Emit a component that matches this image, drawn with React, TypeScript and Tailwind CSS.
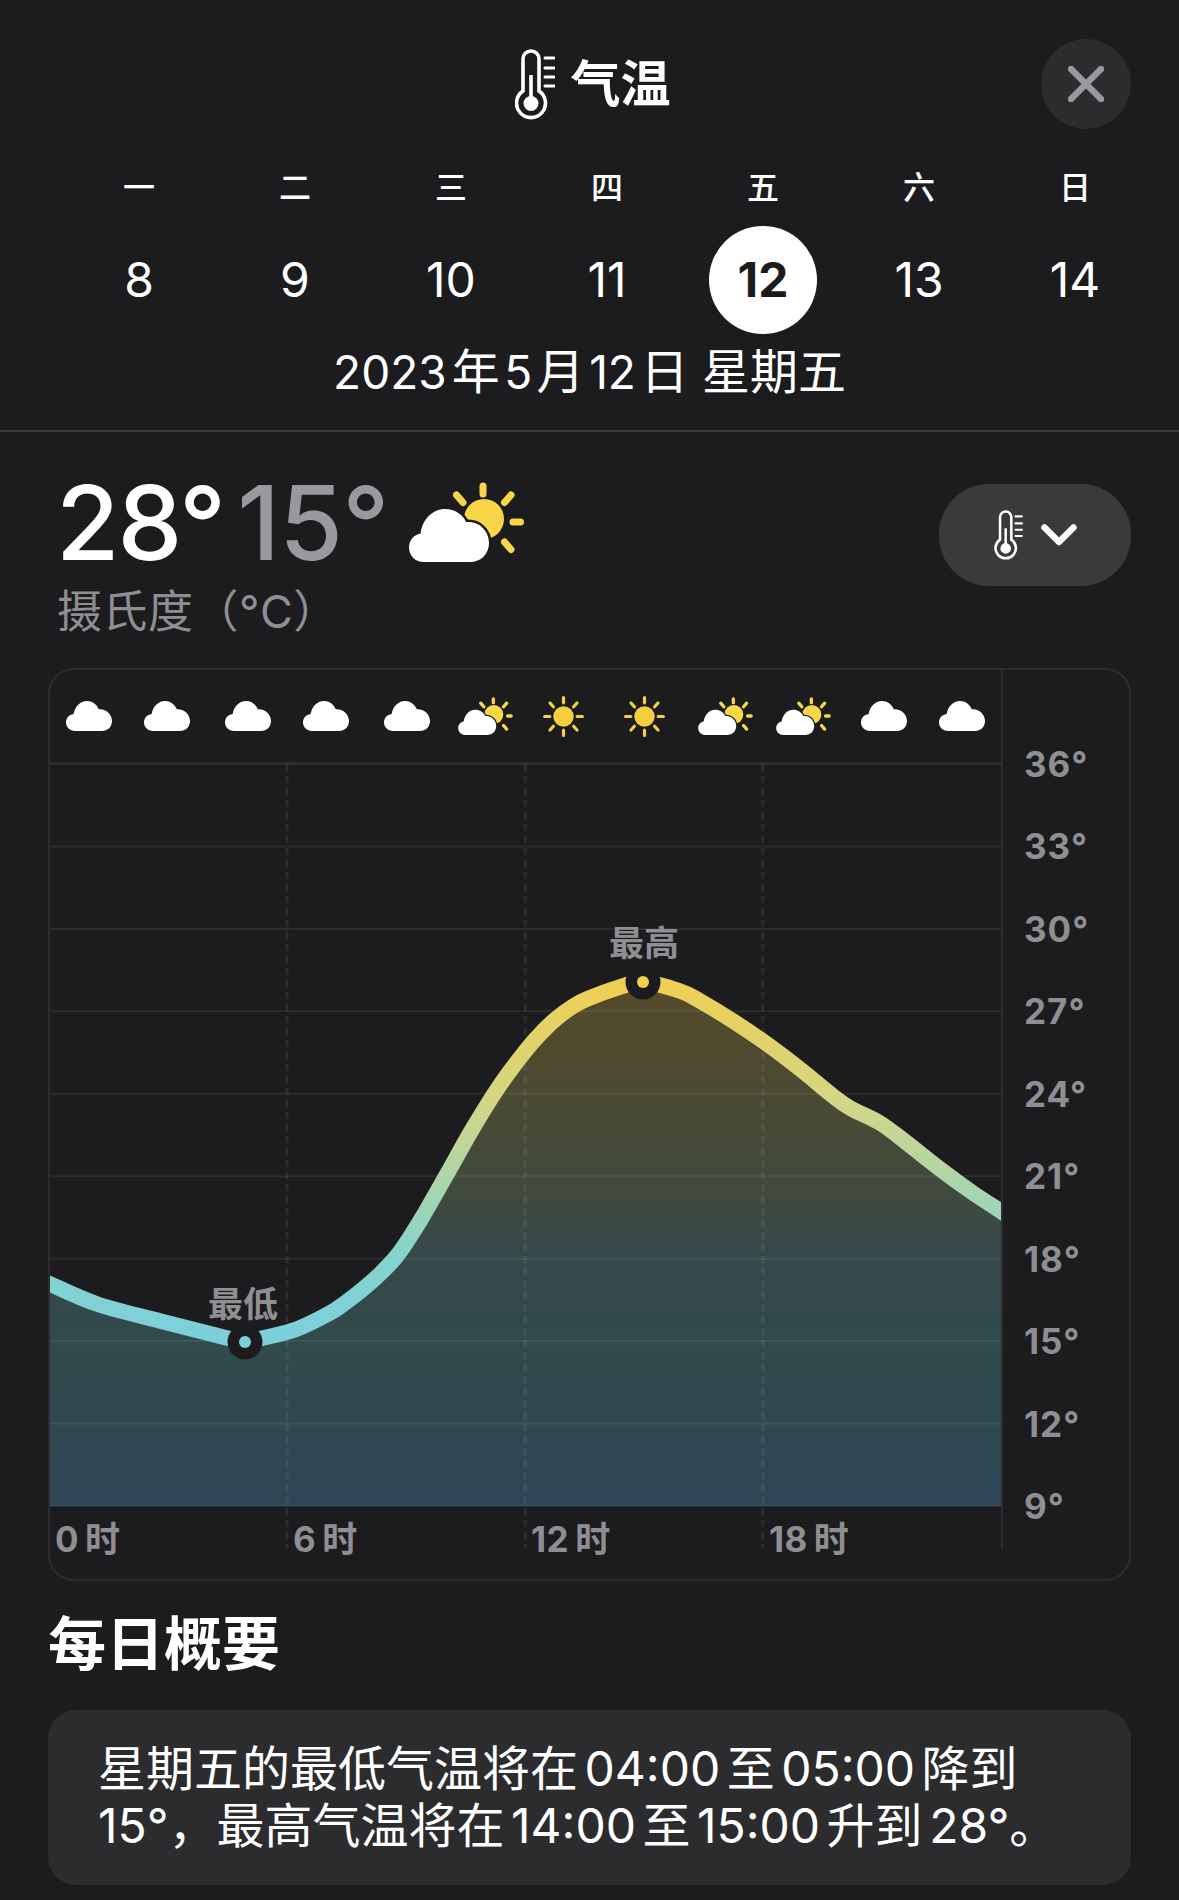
const weekDays = [
  { name: '一', day: '8' },
  { name: '二', day: '9' },
  { name: '三', day: '10' },
  { name: '四', day: '11' },
  { name: '五', day: '12', active: true },
  { name: '六', day: '13' },
  { name: '日', day: '14' },
];

const hourly = [
  { kind: 'c', nudge: '-translate-x-[1px]' },
  { kind: 'c', nudge: '-translate-x-[2px]' },
  { kind: 'c', nudge: '' },
  { kind: 'c', nudge: '-translate-x-[1px]' },
  { kind: 'c', nudge: '' },
  { kind: 'p', nudge: '' },
  { kind: 's', nudge: '-translate-x-[2px]' },
  { kind: 's', nudge: '' },
  { kind: 'p', nudge: 'translate-x-[2px]' },
  { kind: 'p', nudge: 'translate-x-[1px]' },
  { kind: 'c', nudge: 'translate-x-[2px]' },
  { kind: 'c', nudge: 'translate-x-[1px]' },
];
const scale = ['36°', '33°', '30°', '27°', '24°', '21°', '18°', '15°', '12°', '9°'];
const gridLines = [0, 1, 2, 3, 4, 5, 6, 7, 8, 9].map((i) => 763 + i * 82.44);
const hourLines = [287, 525, 763];
const hourLabels = [
  { x: 55, num: '0' },
  { x: 293, num: '6' },
  { x: 531, num: '12' },
  { x: 769, num: '18' },
];

const curve: [number, number][] = [
  [40, 1278], [48, 1282], [97, 1303], [160, 1320], [227, 1337], [245, 1341], [263, 1337], [297, 1328],
  [330, 1312], [345, 1302], [363, 1288], [380, 1273], [396, 1256], [410, 1236], [423, 1215], [447, 1173],
  [473, 1127], [500, 1084], [527, 1048], [543, 1030], [557, 1017], [572, 1006], [587, 998], [620, 986],
  [643, 981], [680, 990], [700, 1000], [733, 1020], [767, 1043], [800, 1068], [833, 1095], [850, 1107],
  [880, 1122], [907, 1142], [940, 1168], [973, 1192], [1002, 1211], [1012, 1218],
];

// catmull-rom through the sampled points
function smooth(pts: [number, number][]) {
  let d = `M${pts[0][0]} ${pts[0][1]}`;
  for (let i = 0; i < pts.length - 1; i++) {
    const p0 = pts[Math.max(i - 1, 0)];
    const p1 = pts[i];
    const p2 = pts[i + 1];
    const p3 = pts[Math.min(i + 2, pts.length - 1)];
    const c1x = p1[0] + (p2[0] - p0[0]) / 6;
    const c1y = p1[1] + (p2[1] - p0[1]) / 6;
    const c2x = p2[0] - (p3[0] - p1[0]) / 6;
    const c2y = p2[1] - (p3[1] - p1[1]) / 6;
    d += ` C${c1x} ${c1y} ${c2x} ${c2y} ${p2[0]} ${p2[1]}`;
  }
  return d;
}

function Thermometer({ className }: { className: string }) {
  return (
    <svg viewBox="0 0 40 71" className={className} fill="none" stroke="#fff">
      <path d="M8 42V10a8 8 0 0 1 16 0V42a14.5 14.5 0 1 1-16 0Z" strokeWidth="3.6" />
      <path d="M16 26V54" strokeWidth="3.6" />
      <circle cx="16" cy="54.5" r="7.5" fill="#fff" stroke="none" />
      <path d="M30 9H39M30 19H39M30 28H39M30 37H39" strokeWidth="3" strokeLinecap="round" />
    </svg>
  );
}

function Cloud({ className }: { className: string }) {
  return (
    <svg viewBox="0 0 46 30" className={className} fill="#fff">
      <path d="M9 30C4 30 0 26.4 0 21.6 0 17 3 13.8 7.6 13 9 5.5 14 0 21 0c5.4 0 9.6 3.2 11.8 8.2C40 7.6 46 13 46 20c0 5.8-4.2 10-10 10Z" />
    </svg>
  );
}

function Sun({ className }: { className: string }) {
  return (
    <svg viewBox="0 0 41 41" className={className} stroke="#f6cf41" strokeWidth="3.2" strokeLinecap="round">
      <circle cx="20.5" cy="20.5" r="10.2" fill="#f6cf41" stroke="none" />
      <path d="M20.5 1.6V6.8M20.5 34.2V39.4M1.6 20.5H6.8M34.2 20.5H39.4M7 7l3.4 3.8M30.6 30.2l3.4 3.8M34 7l-3.4 3.8M10.4 30.2L7 34" />
    </svg>
  );
}

function PartlyCloudy({ className }: { className: string }) {
  return (
    <svg viewBox="0 0 115 80" className={className}>
      <circle cx="75" cy="37" r="20" fill="#f8d648" />
      <path
        d="M74 4V12M47.5 13L54 20.5M102 13L95.5 20.5M95.5 60L102 67.5M104 40H111.5"
        stroke="#f8d648"
        strokeWidth="7"
        strokeLinecap="round"
        fill="none"
      />
      <path
        d="M15 80C6.5 80 0 73.6 0 65.4 0 58 4.8 52.8 11.6 51.4 13.4 37 24 27 36 27c9.6 0 17.6 5.4 21.4 13.2C70 39 80 49 80 61c0 11-8 19-19 19Z"
        fill="#fff"
        stroke="#1c1c1e"
        strokeWidth="5"
        paintOrder="stroke"
      />
    </svg>
  );
}

function TemperatureChart() {
  const line = smooth(curve);
  return (
    <svg viewBox="50 763 951 785" className="block w-[951px] h-[785px] overflow-visible">
      <defs>
        <linearGradient id="stroke" gradientUnits="userSpaceOnUse" x1="0" y1="981" x2="0" y2="1342">
          <stop offset="0" stopColor="#efcf52" />
          <stop offset="0.33" stopColor="#d4d686" />
          <stop offset="0.53" stopColor="#b1d5a6" />
          <stop offset="0.745" stopColor="#87d4cb" />
          <stop offset="1" stopColor="#7bcfdd" />
        </linearGradient>
        <linearGradient id="area" gradientUnits="userSpaceOnUse" x1="0" y1="981" x2="0" y2="1505">
          <stop offset="0" stopColor="#554a29" />
          <stop offset="0.227" stopColor="#4a4a33" />
          <stop offset="0.418" stopColor="#3f4a3e" />
          <stop offset="0.513" stopColor="#36494a" />
          <stop offset="0.69" stopColor="#314a4c" />
          <stop offset="1" stopColor="#2e4656" />
        </linearGradient>
        <clipPath id="plot">
          <rect x="50" y="763" width="951" height="785" />
        </clipPath>
      </defs>
      <g clipPath="url(#plot)">
        <path d={`${line} L1012 1505 L40 1505 Z`} fill="url(#area)" />
        {gridLines.map((y) => (
          <line key={y} x1="50" x2="1001" y1={y} y2={y} stroke="#fff" strokeOpacity="0.07" strokeWidth="2" />
        ))}
        {hourLines.map((x) => (
          <line key={x} x1={x} x2={x} y1="763" y2="1547" stroke="#fff" strokeOpacity="0.07" strokeWidth="3" strokeDasharray="7 5" />
        ))}
        <path d={line} fill="none" stroke="url(#stroke)" strokeWidth="15.5" />
      </g>
      <circle cx="245" cy="1341" r="17.5" fill="#1c1c1e" />
      <circle cx="245" cy="1341" r="6" fill="#7bcfdd" />
      <circle cx="643" cy="981" r="17.5" fill="#1c1c1e" />
      <circle cx="643" cy="981" r="6" fill="#f0cf50" />
      <g fontSize="35" fontWeight="600" fill="#8e8e93">
        <text x="243" y="1316" textAnchor="middle">最低</text>
        <text x="644" y="955" textAnchor="middle">最高</text>
        {hourLabels.map((l) => (
          <text key={l.num} x={l.x} y="1551" fontWeight="700" letterSpacing="0.5">{`${l.num}\u2009时`}</text>
        ))}
      </g>
    </svg>
  );
}

// latin runs inside a chinese line keep the small gap iOS leaves around them
function DateRun({ children }: { children: string }) {
  return <span className="mx-[4.5px] text-[46px]">{children}</span>;
}

function Run({ children }: { children: string }) {
  return <span className="mx-[6.5px]">{children}</span>;
}

export default function App() {
  return (
    <div className="w-[1179px] h-[1900px] overflow-hidden bg-[#1c1c1e] text-white font-['Inter','Noto_Sans_CJK_SC',sans-serif]">
      <header className="h-[432px] border-b-2 border-[#3a3a3c] pt-[39px]">
        <div className="relative h-[90px] flex items-center justify-center gap-[16px] pl-[6px]">
          <Thermometer className="w-[40px] h-[71px]" />
          <h1 className="text-[50px] leading-none font-semibold">气温</h1>
          <button className="absolute right-[48px] top-0 w-[90px] h-[90px] rounded-full bg-[#2c2c2e] flex items-center justify-center">
            <svg viewBox="0 0 36 36" className="w-[36px] h-[36px]" stroke="#98989e" strokeWidth="6.5" strokeLinecap="round">
              <path d="M3 3L33 33M33 3L3 33" />
            </svg>
          </button>
        </div>
        <div className="ml-[61px] w-[1092px] grid grid-cols-7 mt-[39px]">
          {weekDays.map((d) => (
            <div key={d.name} className="text-center text-[32px] leading-[40px] font-medium">{d.name}</div>
          ))}
        </div>
        <div className="ml-[61px] w-[1092px] grid grid-cols-7 mt-[18px]">
          {weekDays.map((d) => (
            <div key={d.day} className="flex justify-center">
              <div
                className={
                  d.active
                    ? 'w-[108px] h-[108px] rounded-full bg-white text-[#1c1c1e] font-bold flex items-center justify-center text-[48px]'
                    : 'h-[108px] flex items-center justify-center text-[48px]'
                }
              >
                {d.day}
              </div>
            </div>
          ))}
        </div>
        <div className="mt-[10px] text-center text-[48px] leading-[56px]">
          <span className="text-[46px]">2023</span>
          <span className="ml-[5px]">年</span>
          <DateRun>5</DateRun>月<DateRun>12</DateRun>日 星期五
        </div>
      </header>

      <section className="flex justify-between items-start pl-[56px] pr-[48px] pt-[50px]">
        <div>
          <div className="flex items-center h-[80px] text-[103px] leading-none font-medium tracking-[-2px]">
            <span>28°</span>
            <span className="ml-[13px] text-[#98989d] tracking-[-0.5px]">15°</span>
            <PartlyCloudy className="ml-[20px] w-[115px] h-[80px]" />
          </div>
          <p className="ml-[1px] mt-[28px] text-[45px] leading-[44px] text-[#8e8e93] tracking-[0.5px]">摄氏度（°C）</p>
        </div>
        <button className="mt-[2px] w-[192px] h-[102px] rounded-[50px] bg-[#3a3a3c] flex items-center justify-center gap-[18px]">
          <Thermometer className="w-[29px] h-[50px]" />
          <svg viewBox="0 0 36 22" className="w-[36px] h-[22px]" fill="none" stroke="#fff" strokeWidth="6.5" strokeLinecap="round" strokeLinejoin="round">
            <path d="M3.5 3.5L18 18L32.5 3.5" />
          </svg>
        </button>
      </section>

      <section className="mx-[48px] mt-[34px] h-[913px] border-2 border-[#2c2c2e] rounded-[26px] flex items-start overflow-hidden">
        <div className="w-[953px] border-r-2 border-[#2c2c2e]">
          <div className="h-[94px] border-b-2 border-[#2c2c2e] grid grid-cols-12 items-center justify-items-center">
            {hourly.map((h, i) =>
              h.kind === 'c' ? (
                <Cloud key={i} className={`w-[46px] h-[30px] ${h.nudge}`} />
              ) : h.kind === 's' ? (
                <Sun key={i} className={`w-[41px] h-[41px] ${h.nudge}`} />
              ) : (
                <PartlyCloudy key={i} className={`w-[55px] h-[38px] ${h.nudge}`} />
              ),
            )}
          </div>
          <TemperatureChart />
        </div>
        <div className="pt-[53px] pl-[21px]">
          {scale.map((s) => (
            <div key={s} className="h-[82.44px] leading-[82.44px] text-[35px] font-bold tracking-[1px] text-[#8e8e93]">{s}</div>
          ))}
        </div>
      </section>

      <h2 className="ml-[48px] mt-[35px] text-[58px] leading-[57px] font-bold">每日概要</h2>
      <div className="mx-[48px] mt-[37px] h-[175px] rounded-[28px] bg-[#2c2c2e] pl-[50px] pt-[30px] text-[48px] leading-[57px]">
        <p>星期五的最低气温将在<Run>04:00</Run>至<Run>05:00</Run>降到</p>
        <p>15°，最高气温将在<Run>14:00</Run>至<Run>15:00</Run>升到<Run>28°。</Run></p>
      </div>
    </div>
  );
}
